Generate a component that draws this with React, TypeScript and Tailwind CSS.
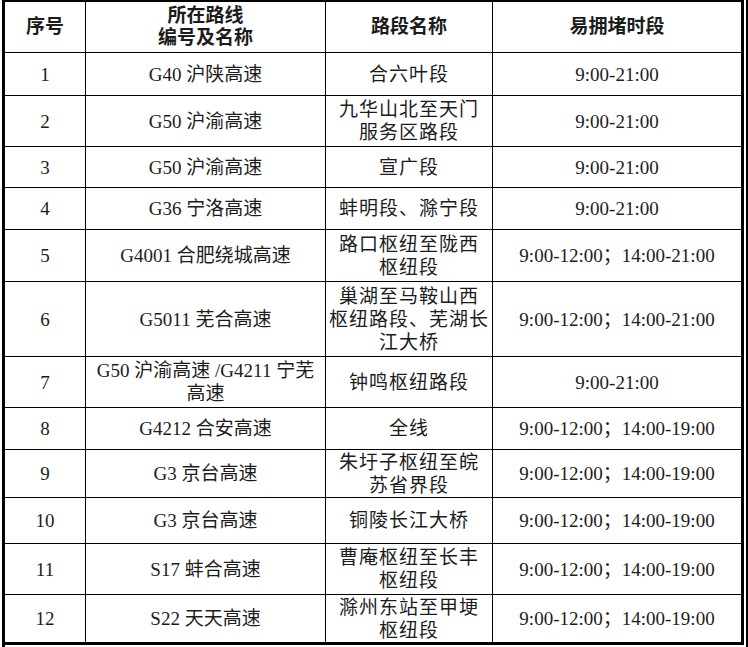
import clsx from "clsx";

type Row = {
  no: string;
  road: string[];
  seg: string[];
  time: string;
  h: string;
};

const rows: Row[] = [
  { no: "1", road: ["G40 沪陕高速"], seg: ["合六叶段"], time: "9:00-21:00", h: "h-[43px]" },
  { no: "2", road: ["G50 沪渝高速"], seg: ["九华山北至天门", "服务区路段"], time: "9:00-21:00", h: "h-[51px]" },
  { no: "3", road: ["G50 沪渝高速"], seg: ["宣广段"], time: "9:00-21:00", h: "h-[41px]" },
  { no: "4", road: ["G36 宁洛高速"], seg: ["蚌明段、滁宁段"], time: "9:00-21:00", h: "h-[42px]" },
  { no: "5", road: ["G4001 合肥绕城高速"], seg: ["路口枢纽至陇西", "枢纽段"], time: "9:00-12:00；14:00-21:00", h: "h-[52px]" },
  { no: "6", road: ["G5011 芜合高速"], seg: ["巢湖至马鞍山西", "枢纽路段、芜湖长", "江大桥"], time: "9:00-12:00；14:00-21:00", h: "h-[75px]" },
  { no: "7", road: ["G50 沪渝高速 /G4211 宁芜", "高速"], seg: ["钟鸣枢纽路段"], time: "9:00-21:00", h: "h-[51px]" },
  { no: "8", road: ["G4212 合安高速"], seg: ["全线"], time: "9:00-12:00；14:00-19:00", h: "h-[42px]" },
  { no: "9", road: ["G3 京台高速"], seg: ["朱圩子枢纽至皖", "苏省界段"], time: "9:00-12:00；14:00-19:00", h: "h-[48px]" },
  { no: "10", road: ["G3 京台高速"], seg: ["铜陵长江大桥"], time: "9:00-12:00；14:00-19:00", h: "h-[46px]" },
  { no: "11", road: ["S17 蚌合高速"], seg: ["曹庵枢纽至长丰", "枢纽段"], time: "9:00-12:00；14:00-19:00", h: "h-[51px]" },
  { no: "12", road: ["S22 天天高速"], seg: ["滁州东站至甲埂", "枢纽段"], time: "9:00-12:00；14:00-19:00", h: "h-[50px]" },
];

function Lines({ lines }: { lines: string[] }) {
  return (
    <>
      {lines.map((l, i) => (
        <div key={i}>{l}</div>
      ))}
    </>
  );
}

export default function App() {
  return (
    <div className="flex bg-white pl-[2px] font-['Liberation_Serif','Noto_Sans_CJK_SC',serif] text-[19px] text-[#1c1c1c]">
      <div className="w-[742px] border-l-[3px] border-t-[2px] border-black">
        {/* header */}
        <div className="grid h-[51px] grid-cols-[81px_240px_167px_251px] font-bold leading-[22px]">
          <div className="flex items-center justify-center border-b border-r border-black">序号</div>
          <div className="flex flex-col items-center justify-center border-b border-r border-black">
            <div>所在路线</div>
            <div>编号及名称</div>
          </div>
          <div className="flex items-center justify-center border-b border-r border-black">路段名称</div>
          <div className="flex items-center justify-center border-b border-r-[3px] border-black">易拥堵时段</div>
        </div>

        {rows.map((r, idx) => {
          const last = idx === rows.length - 1;
          return (
            <div key={r.no} className={clsx("grid grid-cols-[81px_240px_167px_251px] leading-[23px]", r.h)}>
              <div className={clsx("flex items-center justify-center border-r border-black", last ? "border-b-[3px]" : "border-b")}>
                {r.no}
              </div>
              <div className={clsx("flex flex-col items-center justify-center border-r border-black", last ? "border-b-[3px]" : "border-b")}>
                <Lines lines={r.road} />
              </div>
              <div className={clsx("flex flex-col items-center justify-center border-r border-black tracking-[1px]", last ? "border-b-[3px]" : "border-b")}>
                <Lines lines={r.seg} />
              </div>
              <div className={clsx("flex items-center justify-center whitespace-pre border-r-[3px] border-black", last ? "border-b-[3px]" : "border-b")}>
                {r.time}
              </div>
            </div>
          );
        })}
      </div>
      <div className="ml-[2px] h-[647px] w-[2px] bg-black" />
    </div>
  );
}
